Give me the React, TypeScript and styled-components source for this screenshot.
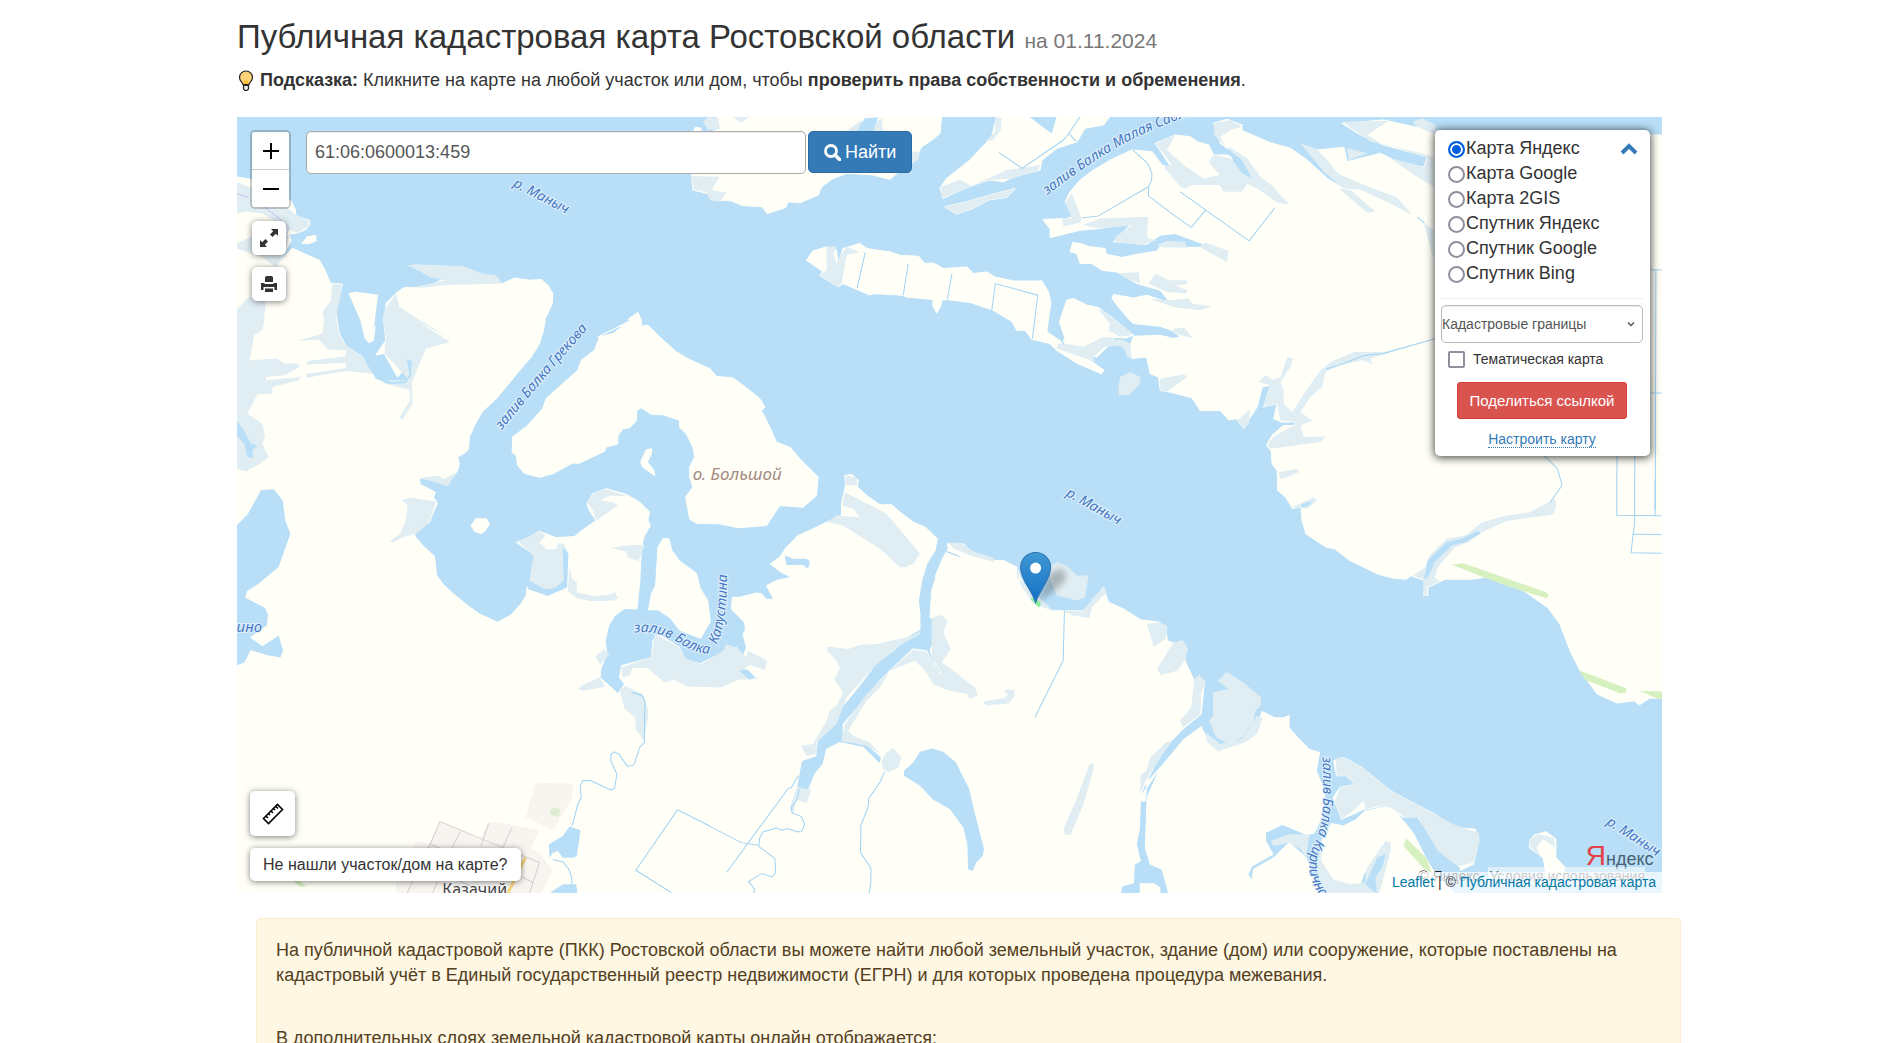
import React, { useState } from "react";
import styled, { createGlobalStyle } from "styled-components";

const sans = `"Liberation Sans", Arial, sans-serif`;
const mapFont = `"Noto Sans", "Open Sans", sans-serif`;

const GlobalStyle = createGlobalStyle`
  *, *::before, *::after { box-sizing: border-box; }
  html { scrollbar-width: none; }
  body {
    margin: 0;
    background: #fff;
    color: #333;
    font-family: ${sans};
    font-size: 18px;
    line-height: 25px;
  }
  button, input, select { font-family: inherit; margin: 0; }
`;

const Page = styled.main`
  display: flex;
  flex-direction: column;
  padding: 16px 236px 0 237px;
`;

const Title = styled.h1`
  margin: 0 0 6px;
  font-size: 33px;
  font-weight: 400;
  line-height: 42px;
`;

const TitleDate = styled.small`
  font-size: 21px;
  color: #777;
`;

const Hint = styled.p`
  display: flex;
  align-items: center;
  gap: 5px;
  margin: 0 0 24px;
  line-height: 25px;
`;

const MapArea = styled.section`
  position: relative;
  height: calc(100vh - 267px);
  min-height: 500px;
  overflow: hidden;
  background: #b8dff7;
`;

const MapDrawing = styled.svg`
  display: block;
  width: 100%;
  height: 100%;
`;

const TopLeft = styled.div`
  position: absolute;
  top: 13px;
  left: 13px;
  display: flex;
  align-items: flex-start;
  gap: 15px;
`;

const ToolColumn = styled.div`
  display: flex;
  flex-direction: column;
  align-items: flex-start;
`;

const ZoomGroup = styled.div`
  display: flex;
  flex-direction: column;
  border: 2px solid rgba(0, 0, 0, 0.2);
  border-radius: 5px;
  background-clip: padding-box;
`;

const ZoomButton = styled.button`
  display: flex;
  align-items: center;
  justify-content: center;
  width: 37px;
  height: 37px;
  padding: 0;
  border: 0;
  background: #fff;
  color: #000;
  &:first-child { height: 38px; border-bottom: 1px solid #ccc; border-radius: 3px 3px 0 0; }
  &:last-child { border-radius: 0 0 3px 3px; }
`;

const FloatingButton = styled.button<{ $size?: number }>`
  display: flex;
  align-items: center;
  justify-content: center;
  width: ${(p) => p.$size ?? 34}px;
  height: ${(p) => p.$size ?? 34}px;
  padding: 0;
  border: 0;
  border-radius: 5px;
  background: #fff;
  color: #333;
  box-shadow: 0 1px 6px rgba(0, 0, 0, 0.5);
`;

const MapTools = styled.div`
  display: flex;
  flex-direction: column;
  gap: 12px;
  padding: 12px 0 0 2px;
`;

const SearchForm = styled.form`
  display: flex;
  gap: 2px;
  margin-top: 1px;
`;

const SearchInput = styled.input`
  width: 500px;
  height: 43px;
  padding: 0 8px;
  border: 1px solid #aaa;
  border-radius: 5px;
  background: #fff;
  box-shadow: inset 0 1px 1px rgba(0, 0, 0, 0.08);
  color: #555;
  font-size: 18px;
`;

const SearchButton = styled.button`
  display: flex;
  align-items: center;
  gap: 4px;
  height: 42px;
  padding: 0 15px;
  border: 1px solid #2e6da4;
  border-radius: 5px;
  background: #337ab7;
  color: #fff;
  font-size: 18px;
`;

const LayerPanel = styled.aside`
  position: absolute;
  top: 13px;
  right: 12px;
  width: 215px;
  padding: 6px 7px 8px 6px;
  border-radius: 5px;
  background: #fff;
  box-shadow: 0 1px 8px 1px rgba(0, 0, 0, 0.7);
`;

const LayerList = styled.fieldset`
  position: relative;
  margin: 0;
  padding: 0 0 0 7px;
  border: 0;
`;

const LayerOption = styled.label`
  display: flex;
  align-items: center;
  gap: 1px;
  line-height: 25px;
`;

const Radio = styled.input`
  appearance: none;
  width: 17px;
  height: 17px;
  margin-top: 2px;
  border: 2px solid #8f8f9d;
  border-radius: 50%;
  background: #fff;
  &:checked {
    border-color: #0060df;
    background: #0060df;
    box-shadow: inset 0 0 0 2px #fff;
  }
`;

const Collapse = styled.button`
  position: absolute;
  top: 5px;
  right: 3px;
  display: flex;
  padding: 0;
  border: 0;
  background: none;
`;

const Divider = styled.hr`
  margin: 12px 0 6px;
  border: 0;
  border-top: 1px solid #eee;
`;

const SelectBox = styled.div`
  position: relative;
  display: flex;
  svg { position: absolute; right: 8px; top: 15px; pointer-events: none; }
`;

const Select = styled.select`
  appearance: none;
  width: 100%;
  height: 38px;
  padding: 0;
  border: 1px solid #bbb;
  border-radius: 5px;
  background: #fff;
  box-shadow: inset 0 1px 1px rgba(0, 0, 0, 0.08);
  color: #555;
  font-size: 14px;
`;

const ThemeOption = styled.label`
  display: flex;
  align-items: center;
  gap: 8px;
  margin: 6px 0 0 7px;
  font-size: 14px;
  line-height: 21px;
`;

const Checkbox = styled.input`
  appearance: none;
  width: 17px;
  height: 17px;
  border: 2px solid #8f8f9d;
  border-radius: 2px;
  background: #fff;
`;

const PanelActions = styled.div`
  display: flex;
  flex-direction: column;
  align-items: center;
  gap: 12px;
  margin-top: 12px;
`;

const ShareButton = styled.button`
  height: 37px;
  padding: 0 12px;
  border: 1px solid #d43f3a;
  border-radius: 3px;
  background: #d9534f;
  color: #fff;
  font-size: 15px;
`;

const SetupLink = styled.a`
  border-bottom: 1px dotted #337ab7;
  color: #337ab7;
  font-size: 14px;
  line-height: 16px;
  text-decoration: none;
`;

const BottomLeft = styled.div`
  position: absolute;
  left: 13px;
  bottom: 12px;
  display: flex;
  flex-direction: column;
  align-items: flex-start;
  gap: 12px;
`;

const NotFoundButton = styled.button`
  height: 33px;
  padding: 0 13px;
  border: 0;
  border-radius: 5px;
  background: #fff;
  box-shadow: 0 1px 6px rgba(0, 0, 0, 0.5);
  color: #333;
  font-size: 16px;
`;

const Copyright = styled.p`
  position: absolute;
  right: 17px;
  bottom: 8px;
  display: flex;
  gap: 8px;
  margin: 0;
  color: #222;
  font-size: 14px;
  line-height: 18px;
  a { padding: 0 0 0 2px; background: rgba(255, 255, 255, 0.5); color: #555; text-decoration: none; }
`;

const Attribution = styled.p`
  position: absolute;
  right: 0;
  bottom: 0;
  margin: 0;
  padding: 0 6px;
  background: rgba(255, 255, 255, 0.7);
  font-size: 14px;
  line-height: 21px;
  a { color: #0078a8; text-decoration: none; }
`;

const Notice = styled.article`
  margin: 25px -19px 0 19px;
  padding: 19px;
  border: 1px solid #faebcc;
  border-radius: 5px;
  background: #fdf7e3;
  color: #54401f;
  p { margin: 0 0 38px; }
  p:last-child { margin: 0; }
`;

/* Map sheets: a letter names the sheet's origin and east-west scale, coordinates run in thirds of a unit. */
const sheets: Record<string, [number, number, number]> = {
  A: [230, 0, 1], D: [230, 320, 1], E: [230, 660, 1], F: [680, 220, 1], G: [680, 560, 1],
  H: [1140, 110, 1], I: [1140, 480, 1.014], J: [680, 110, 1], K: [1060, 110, 1], L: [580, 530, 1],
};

const trace = (source: string) => {
  let origin = sheets.A;
  const points: string[] = [];
  source.trim().split(/\s+/).forEach((token) => {
    if (sheets[token]) { origin = sheets[token]; return; }
    const [x, y] = token.split(",").map(Number);
    points.push(`${(origin[0] + (x * origin[2]) / 3).toFixed(1)},${(origin[1] + y / 3).toFixed(1)}`);
  });
  return points.join(" ");
};

const land = [
  // north-west shore
  `A 18,530 60,537 95,552 150,585 185,602 198,628 200,648 240,660 242,672 230,688 205,698 180,702 186,722 165,760 130,820 70,895 45,930 18,1030`,
  `A 218,730 235,710 260,706 260,722 240,730`,
  // western mainland and both banks of the inlets
  `A 190,745 270,780 285,805 303,848 340,852 325,910 320,940 330,1000 D 322,0 330,40 350,78 400,110 440,175 485,192 530,185 548,155 545,120 505,170 465,100 440,104 470,60 465,20
   A 465,990 470,910 500,880 525,862 590,862 640,838 700,835 820,850 855,833 900,840 935,838 955,855 970,880 968,910 945,960 940,1000
   D 947,0 942,30 930,70 905,110 870,150 850,175 800,235 760,272 735,315 720,350 718,385 705,398 685,410 690,430 685,450 655,492 620,478 570,473 572,492 618,515 612,530 624,548 610,580 600,606 570,620 555,645 580,675 615,708 622,765 640,790 670,818 715,855 750,880 805,905 845,883 875,850 890,825 893,800 950,825 1000,808 1015,800 1015,700 1000,680 960,690 910,700 862,665 900,650 930,632 980,652 1035,648 1060,628 1100,600 1080,570 1072,550 1090,520 1130,505 1190,522 1230,545 1260,575 1255,600 1262,615 1242,650 1235,690 1232,750 1230,790 1222,865 1185,863 1155,885 1137,915 1127,960 1132,1000 1115,1040 1110,1080
   E 1110,50 1150,85 1165,100 1185,70 1170,50 1175,20 L 125,435 125,405 215,380 220,330 235,310 300,350 315,385 360,400 400,380 470,350 485,395 500,350 490,310 497,300 495,275 470,250 455,235 458,200 480,200 530,187 545,190 560,207 582,205 560,165 590,150 635,140 605,125 572,100 600,80 620,50 655,15 690,0
   F 440,905 485,885 485,850 497,795 495,765 515,762 535,780 533,800 560,825 600,853 635,853 660,875 700,905 735,920 772,955 765,990 740,1030 725,1080
   G 725,60 715,120 720,160 720,205 680,230 640,270 585,312 550,360 510,410 480,445 465,490 425,520 412,545 408,585 365,600 350,680 385,690 405,640 430,610 440,565 480,545 550,560 600,610 605,590 550,540 490,540 490,490 560,410 600,360 650,310 700,265 740,270 770,330 790,348 765,310 750,270 765,235 765,180 750,170 755,90 785,0
   F 765,1070 790,1010 805,985 802,970 850,970 880,1000 940,1020 970,1020 1010,1040 G 1020,50 1060,130 1120,150 1210,150 1240,120 1270,80 1285,125 1330,145 1400,190 1440,185
   I 0,417 20,430 75,435 80,480 135,500 132,540 158,597 190,600 180,700 125,745 60,815 45,850 10,920 0,950 G 1440,620 1400,665 1395,720 1380,720 1378,800 1368,850 1380,900 1362,910 1360,965 1325,975 1320,1000 E 20,700 20,100
   D 20,1038 48,1025 65,990 115,1005 155,1012 163,990 150,942 125,958 100,975 65,950 115,915 118,880 108,860 50,830 55,812 90,790 150,740 185,640 170,600 162,540 135,505 95,507 55,580 20,615 A 18,1020 55,910 100,880 135,800`,
  // islet inside the western bay
  `A 360,880 380,876 445,885 435,960 433,1000 D 438,20 432,60 420,67 408,55 395,0`,
  `D 725,615 740,595 770,595 780,610 768,630 755,639 735,632`,
  // o. Bolshoy
  `A 1105,1010 1165,980 1200,970 1198,955 1225,937 1235,960 1235,978 1255,975 1280,1000 D 1285,45 1340,95 1380,118 1440,145
   F 70,440 90,445 110,468 160,473 190,495 240,535 255,560 245,570 270,620 290,665 330,680 360,715 415,770 410,825 370,860 300,855 260,915 175,922 120,910 50,908 30,895 18,830 40,800 30,770 30,740 45,710 40,680 20,640 0,620
   D 1350,300 1300,283 1265,282 1235,262 1222,270 1220,300 1200,322 1180,325 1165,345 1165,370 1130,380 1125,392 1045,430 1030,427 970,460 930,470 885,458 865,435 860,405 848,395 850,350 895,315 940,265 950,235 1045,150 1055,120 1095,90 1110,50 1150,40 1205,0`,
  `D 1233,425 1250,388 1266,385 1265,400 1253,425 1273,450 1275,465 1240,440`,
  `L 235,50 250,25 268,25 277,60 300,92 350,128 362,175 383,208 392,272 362,323 300,298 272,262 235,237 207,237 215,190 228,165`,
  // northern shore
  `J 35,195 100,150 100,62 120,58 110,18 785,18 780,70 755,90 725,110 700,155 650,190 630,208 580,195 500,190 455,208 425,230 415,255 360,278 325,275 318,292 262,310 248,290 190,287 155,272 100,270 85,250 40,240`,
  `J 42,62 48,52 62,54 66,64`,
  `J 780,235 800,205 870,150 935,80 950,18 1290,18 1270,45 1215,55 1190,95 1130,115 1085,150 1080,180 1000,200 970,215 930,210 880,225 830,245 790,265`,
  `J 795,290 860,275 930,255 1005,235 980,262 925,270 880,295 830,312`,
  // long island
  `F 380,120 400,92 440,80 470,90 475,130 490,85 540,70 560,85 630,95 660,105 715,108 735,130 760,128 790,145 860,140 880,160 920,155 945,170 1000,182 1085,182 1105,215 1112,245 1100,335 1145,365 1200,400 1272,450 1262,460 1190,428 1130,390 1110,370 1055,357 1035,330 1010,330 995,303 940,270 870,247 800,238 785,240 782,258 770,278 758,255 760,238 680,230 668,225 580,220 570,224 490,190 475,200 420,165 430,155`,
  `F 1160,240 1180,235 1220,255 1255,262 1300,295 1360,345 1290,370 1250,410 1135,380 1155,355 1138,305`,
  // north-eastern mainland
  `K 460,40 500,28 545,45 545,62 630,98 690,115 740,150 800,205 850,235 900,233 820,180 770,120 850,112 860,155 960,130 1030,165 1090,170 1100,140 970,105 900,75 845,40 970,30 1060,50 1200,75 1820,75
   I 1580,655 1505,652 1475,672 1460,660 1410,667 1350,640 1300,570 1270,510 1240,430 1205,382 1140,335 1100,312 1020,290 980,296 900,296 850,320 850,345 838,345 840,300 800,285 785,296 745,292 700,280 665,262 620,240 575,205 550,200 490,160 478,120 475,80 450,83 430,50 405,28
   H 412,1130 410,1080 395,1060 392,1020 378,1005 395,975 430,945 460,945 470,935 425,935 400,925 410,880 370,890 390,825 365,830 350,890 330,920 310,955 290,925 265,928 240,900 180,900 155,862 100,848 60,840 55,800 30,790 20,745
   K 260,740 215,745 205,720 220,678 300,675 340,685 360,680 340,662 300,648 220,640 205,625 175,590 155,565 160,553 220,563 260,555 330,578 300,540 230,520 170,485 125,480 95,460 60,460 50,430 30,425 38,397 60,400 90,410 135,415 138,432 185,442 230,432 290,422 300,410 410,412 440,405 345,370 300,375 260,402 160,395 215,340 120,355 60,360 -30,382 -30,355 -52,328 20,325 40,320 15,275 30,245 60,210 100,180 150,150 215,120 275,125 305,165 335,175 285,100 345,75 390,80 410,95 445,105 460,135 500,135 540,155 575,205 540,155 500,115 480,100`,
  // southern capes
  `I 85,1240 65,1165 30,1150 15,1100 20,950 60,860 130,775 180,738 205,790 240,798 310,778 350,720 360,692 395,710 420,712 440,705 440,742 465,770 500,806 530,815 520,870 540,920 550,980 515,1055 495,1062 420,1030 370,1055 370,1080 392,1120 330,1155 318,1180 330,1200 335,1165 395,1130 440,1085 490,1130 530,1240`,
  `I 0,1208 40,1208 58,1220 58,1240 0,1240`,
  `I 530,1090 565,1028 600,1035 640,1015 665,990 740,975 810,1060 870,1170 930,1240 690,1240 700,1180 740,1100 720,1090 660,1180 640,1240 560,1200 535,1140`,
  `I 572,840 600,830 655,860 740,930 870,1000 930,1040 990,1045 1000,1080 985,1150 940,1170 880,1130 820,1010 780,1010 720,975 660,985 595,1015 570,950 590,920 635,910 610,885 580,885`,
  `I 1150,1080 1165,1062 1198,1052 1228,1075 1228,1130 1255,1160 1250,1190 1220,1240 1200,1180 1190,1130 1150,1100`,
];

const marsh = [
  `A 20,545 100,575 160,610 195,640 240,662 238,680 205,698 182,690 100,640 55,635 20,640`,
  `A 20,730 90,700 180,705 165,765 140,800 100,770 20,745`,
  `A 20,930 60,890 110,900 105,960 D 100,30 75,45 62,120 145,115 165,130 210,130 210,142 165,165 110,170 110,180 215,170 210,180 130,200 130,220 85,222 55,280 100,310 108,345 100,370 118,410 85,435 50,452 22,445`,
  `A 340,855 320,950 328,1000 D 345,70 400,110 430,160 350,152 232,172 232,160 350,143 350,128 232,133 235,122 350,108 350,90 295,88 270,58 205,62 280,40 285,0 A 280,935 305,900 310,848`,
  `A 500,880 510,920 660,1015 D 560,0 662,65 590,85 575,120 548,185 550,250 520,297 510,292 543,240 540,208 460,188 480,180 540,180 465,100 470,50 460,0 A 465,930`,
  `A 535,795 560,792 700,798 760,820 800,825 820,850 640,855 590,862 550,862 645,840 600,830 570,812`,
  `D 517,538 545,532 620,543 600,606 560,640 520,650 490,667 482,662 512,640 530,600 535,555`,
  `D 570,472 625,465 645,475 680,455 655,497 625,487`,
  `D 865,662 900,648 930,632 950,645 930,665 950,687 980,685 985,668 1003,670 1015,695 1000,690 1005,780 975,803 945,806 900,780 912,705`,
  `D 1072,545 1095,515 1130,507 1195,527 1140,525 1112,540 1150,545 1165,555 1100,600 1090,570`,
  `D 1145,683 1185,675 1245,673 1228,722 1195,710 1188,692`,
  `D 1020,740 1028,775 1042,785 1042,815 1090,826 1145,822 1155,813 1165,832 1155,840 1085,842 1040,832 1015,810`,
  `D 1098,1008 1122,985 1140,1000 1112,1032`,
  `E 1045,85 1060,72 1110,50 1128,78 1060,90`,
  `E 1170,90 1185,75 1240,100 1257,150 1253,180 1243,240 1218,205 1217,170 1185,145`,
  `L 125,410 215,378 225,310 300,350 318,385 365,400 430,360 440,340 475,355 500,380 505,360 562,390 555,418 510,403 495,412 535,445 475,447 425,470 325,467 282,447 255,455 203,412 158,412 150,435 128,440`,
  `F 497,765 530,770 532,795 498,793`, `F 495,815 620,880 700,975 720,1000 700,1030 660,1040 600,985 490,915 440,905 470,885 540,890 520,865 487,855`,
  `F 805,965 845,968 880,992 940,1012 945,1025 880,1008 820,985`,
  `G 1010,5 1020,70 1060,130 1120,150 1010,50`,
  `G 1110,20 1130,5 1160,15 1190,45 1225,45 1215,110 1190,120 1130,105 1110,60`,
  `G 1150,150 1210,150 1240,110 1272,80 1280,95 1235,140 1228,172 1180,165`,
  `G 645,0 705,0 680,20 660,20`,
  `G 720,155 720,210 700,225 590,250 540,252 505,265 443,257 442,270 470,300 480,325 463,355 490,395 470,435 450,450 440,480 400,550 363,555 380,585 412,580 410,545 470,490 500,410 580,320 650,260 720,220`,
  `G 755,172 785,162 803,182 790,215 812,265 785,305 800,315 885,380 893,405 868,415 862,400 800,388 760,370 735,330 705,300 630,330 600,380 560,420 505,510 520,525 570,545 600,580 560,555 485,540 495,490 560,400 640,320 700,268 740,272 770,330 790,345 755,290`,
  `G 605,600 620,575 640,562 665,590 655,620 625,635 610,625`,
  `G 350,682 395,685 380,727 350,715 340,760 330,740`,
  `G 908,425 918,420 972,412 985,400 972,395 980,385 1003,388 1003,408 985,428 920,434`,
  `G 1228,610 1240,606 1240,625 1210,730 1172,820 1155,823 1150,805 1195,700`,
  `G 1400,190 1440,185 1440,245 1425,255`,
  `I 20,432 55,425 80,435 75,475 40,497`, `I 98,485 125,478 142,505 130,540 110,570 60,583 50,565`,
  `I 160,595 175,582 195,605 180,635 178,700 125,740 118,720 150,680`,
  `I 230,600 255,573 305,605 357,650 355,675 340,690 335,720 300,770 260,788 225,770 203,720 215,705 215,635 260,625`,
  `I 345,705 362,712 345,760 310,785 230,812 195,780 195,755 235,790 300,775`,
  `I 75,785 95,780 60,830 15,900 0,940 0,885 18,870 30,830`,
  `I 578,832 600,830 655,860 740,930 870,1000 925,1030 965,1045 1000,1055 1003,1080 985,1145 940,1155 880,1110 835,1040 825,1010 785,1012 740,980 700,975 665,985 660,960 635,985 595,1015 575,960 590,920 635,910 610,885 580,885`,
  `I 500,1060 440,1060 385,1080 395,1095 440,1085 475,1105 490,1130`,
  `I 535,1075 560,1030 540,1060 535,1140 570,1195 620,1210 665,1205 668,1165 690,1130 725,1080 740,1085 740,1110 705,1240 540,1240 520,1160`,
  `I 1150,1095 1150,1075 1175,1060 1220,1070 1228,1100 1190,1075 1170,1100 1185,1130`,
  `J 70,35 85,20 115,25 120,55 85,60`, `J 35,198 120,200 95,240 140,248 120,275 90,270 80,245 42,240`,
  `J 160,20 210,20 185,38`,
  `J 500,62 545,30 545,45 530,65`, `J 590,35 605,25 610,65 580,65`, `J 690,125 720,125 715,150 695,158`,
  `J 782,230 840,208 875,228 980,180 1080,165 1075,180 1000,205 930,210 830,245 785,265`,
  `J 795,290 860,275 930,255 1005,235 980,262 925,270 880,295 830,312`,
  `J 915,95 945,65 945,20 965,25 962,60 940,90`,
  `F 440,80 470,78 460,100 470,130 485,100 500,80 540,95 500,105 485,190 475,200 420,165 440,150`,
  `F 1255,262 1300,295 1355,340 1320,350 1285,330 1292,310`,
  `F 1135,370 1215,380 1265,350 1315,360 1315,375 1275,378 1240,410 1245,425 1130,385`,
  `F 1320,470 1350,455 1380,470 1380,490 1345,525 1315,525 1315,500`,
  `K 285,100 345,75 320,120 370,165 430,205 478,195 445,155 460,135 510,145 575,205 540,150 500,115 510,112 560,145 600,200 640,230 655,250 688,283 650,278 590,235 560,222 545,245 490,245 478,225 390,225 378,235 360,230 310,170 335,165`,
  `K 460,40 510,30 545,50 510,60 480,80 495,110 462,75`,
  `K 15,275 35,250 65,325 60,338 10,348 5,325 35,325`,
  `K 65,345 120,325 265,320 260,370 265,385 290,390 240,405 165,395 165,380 215,345 120,355`,
  `K 290,405 320,392 375,395 380,412 310,412`, `K 435,397 505,422 500,455 415,410`,
  `K 175,490 235,485 240,520 190,500`, `K 265,520 285,490 325,510 380,510 380,522 345,525 380,540 378,550 320,545`,
  `K 265,565 320,570 385,565 395,580 455,588 420,600 345,592`,
  `K 340,655 370,652 400,685 340,670`,
  `K 110,595 150,625 215,670 205,680 145,660 150,640`, `K 0,698 70,710 130,680 180,685 210,700 215,745 200,740 195,720 180,705 130,710 100,740 20,720`,
  `K 300,808 370,795 380,800 320,845 300,840`,
  `H 60,805 130,792 140,798 75,838 60,830`,
  `H 355,815 375,795 395,808 420,800 440,740 458,745 450,770 420,815 430,840 430,880 455,905 500,835 540,780 570,755 640,725 730,725 860,690 780,715 690,745 695,762 665,750 600,765 555,785 545,830 510,860 480,905 515,930 480,945 490,980 555,978 540,995 390,1015 380,1005 400,978 460,945 470,935 420,930 410,880 370,890 390,825`,
  `H 290,930 330,895 325,940 310,957`, `H 415,1085 470,1075 475,1085 440,1100 418,1105`,
  `H 455,1190 520,1160 530,1170 500,1195`,
  `K 845,35 985,32 920,75 970,105 1010,110 930,95 880,60`, `K 1055,35 1085,25 1125,45 1125,75 1070,50`,
  `K 985,105 1120,140 1120,230 1060,195 990,145 1090,170 1100,145`,
  `K 720,100 770,118 800,150 830,190 900,220 1010,262 1055,315 990,280 900,240 850,235 790,185`,
  `K 835,235 870,240 945,305 920,308`, `K 860,115 920,130 865,150`, `K 1090,340 1120,360 1120,450`,
  `I 805,285 840,262 855,225 905,175 960,165 1010,125 1080,105 1150,95 1225,55 1230,75 1220,103 1160,110 1080,122 1010,155 970,185 930,200 880,260 870,290 885,302 848,320 848,345 838,345 835,295`,
];

const water = [
  `D 22,300 45,330 65,370 85,375 70,390 72,412 55,410 45,370 22,345`,
  `D 400,112 440,160 485,185 530,182 540,160 532,118 548,122 545,165 530,188 480,192 440,175`,
  `D 1000,680 1017,700 1012,800 955,826 895,805 900,795 950,808 985,800 1003,780`,
  `L 615,75 640,85 680,85 690,92 685,115 670,103 620,103`, `L 478,418 505,418 525,440 510,447 490,430`,
  `G 672,630 700,605 720,573 755,563 790,573 828,605 868,685 885,760 912,865 908,885 888,905 878,930 864,925 862,850 850,800 810,745 758,715 720,675 672,645`,
  `E 960,590 958,550 1000,525 1020,497 1053,508 1042,585 1030,590 1000,590 985,570 970,575`,
  `E 962,695 1000,670 1040,670 1044,697`,
  `J 530,62 555,25 595,22 580,65`, `J 1045,18 1130,18 1115,70 1100,60`,
  `K 500,115 545,150 575,205 545,190 520,155`,
  `I 475,72 505,62 503,72 480,82`,
  `I 838,295 850,240 905,185 950,175 1000,150 1005,160 960,185 920,195 870,245 850,290`,
  `I 700,1240 665,1210 700,1130 725,1118 715,1160 695,1190`,
  `I 785,1012 820,1010 880,1110 945,1160 940,1240 880,1190 845,1130 810,1060`,
];

const green = [
  `I 920,252 955,248 1200,335 1207,345 1200,353 1080,315 1000,285`,
  `I 1295,568 1435,622 1437,635 1418,638 1315,598`, `I 1475,630 1580,633 1580,655 1530,655`,
  `I 778,1095 785,1072 845,1130 862,1175 840,1165`, `E 185,655 205,655 230,675 215,678`,
];

const town = [
  `E 918,366 1030,368 1028,410 972,508 888,470`,
  `E 632,480 750,535 778,485 800,483 930,508 905,560 932,578 970,630 935,697 500,697 500,660 560,540 600,550`,
];

const roads = [
  `E 533,697 600,555 632,482 820,560 930,605 900,697`, `E 600,548 650,570`, `E 668,560 693,512`, `E 755,555 778,487`, `E 820,560 848,500`, `E 610,697 625,660`, `E 850,635 912,665`, `E 690,660 760,690`,
];

const streams = [
  `F 532,203 556,97`, `F 670,225 685,130`, `F 802,238 816,160`, `F 935,270 946,190 1073,225 1057,355`, `F 1143,358 1152,373`, `F 800,993 838,1008`,
  `J 956,127 1026,175 1150,90 1166,70 1200,20`, `J 1166,70 1188,94`,
  `K 218,120 262,160 275,190 274,210 265,230 265,258 348,320 393,352 436,300`, `K 67,323 113,318 265,230`, `K 360,245 566,392 642,295`, `K 1070,320 1092,340`, `K 163,686 195,686`,
  `H 557,776 600,763 670,736 730,730 885,685`,
  `H 1210,1035 1250,1075 1264,1125 1230,1172 I 1213,65`,
  `H 1530,479 1580,479`, `H 1545,479 1543,1200`, `H 1530,848 1580,848`, `H 1429,1030 I 1408,0 1408,104 1580,106`, `H 1482,1030 I 1461,0 1461,125 1450,217 1580,219`, `I 1455,161 1580,162`, `I 1521,0 1521,106`,
  `E 1207,96 1235,103 1246,120 1244,245 1230,260 1213,313 1193,316 1168,280 1153,273 1144,282 1144,300 1162,340 1155,382 1145,388 1085,360 1060,359 1052,375 1055,410 1045,430 1028,495`,
  `E 970,596 1000,602 1018,625 1027,650 1027,670`, `E 1325,695 1219,628 1343,447 1440,495 G 0,750 185,845 237,853`,
  `G 141,934 325,683 335,680 355,645`,
  `G 358,685 352,715 335,740 337,757 365,767 374,790 367,810 353,813 323,803 305,808 290,801 250,813 240,830 237,857 285,892 288,935 278,948 245,938 206,962 225,985 222,997`,
  `G 614,633 600,665 567,712 564,740 543,793 542,875 573,922 573,960 568,997`,
  `G 1153,150 1149,300 1064,470`,
];

const polygons = (rings: string[], fill: string, stroke?: string) => (
  <g fill={fill} stroke={stroke} strokeWidth={stroke ? 1 : 0} strokeLinejoin="round">
    {rings.map((ring, i) => <polygon key={i} points={trace(ring)} />)}
  </g>
);

const lines = (routes: string[], stroke: string, width = 1) => (
  <g fill="none" stroke={stroke} strokeWidth={width}>
    {routes.map((route, i) => <polyline key={i} points={trace(route)} />)}
  </g>
);

const waterLabels = [
  { id: "manych-w", d: "M513 186 L582 222", text: "р. Маныч" },
  { id: "manych-c", d: "M1065 495 L1137 535", text: "р. Маныч" },
  { id: "manych-e", d: "M1605 823 L1675 868", text: "р. Маныч" },
  { id: "grekova", d: "M502 430 Q535 390 552 370 T606 308", text: "залив Балка Грекова" },
  { id: "sablina", d: "M1047 195 Q1090 162 1125 143 T1240 98", text: "залив Балка Малая Саблина" },
  { id: "kapustina", d: "M635 632 Q658 629 680 643 T725 652", text: "залив Балка" },
  { id: "kapustina-n", d: "M717 644 Q729 620 727 560", text: "Капустина" },
  { id: "kirpich", d: "M1322 756 C1324 810 1322 825 1314 842 C1304 862 1308 885 1328 905", text: "залив Балка Кирпичная" },
];

const BasinMap = () => (
  <MapDrawing viewBox="237 117 1425 775" preserveAspectRatio="xMidYMid slice" role="img" aria-label="Карта">
    <defs>
      <linearGradient id="pin" x1="0" y1="0" x2="0" y2="1">
        <stop offset="0" stopColor="#4198d3" />
        <stop offset="1" stopColor="#126fc6" />
      </linearGradient>
      <filter id="pin-shadow" x="-50%" y="-50%" width="200%" height="200%"><feGaussianBlur stdDeviation="3" /></filter>
    </defs>
    <rect x="237" y="117" width="1425" height="775" fill="#b8dff7" />
    {polygons(land, "#fffff8", "#fffff8")}
    {polygons(marsh, "#e0eef4")}
    {polygons(water, "#b8dff7")}
    {polygons(green, "#d7f0c0")}
    {polygons(town, "#f8f5f1")}
    {polygons([`E 968,438 992,445 988,470 960,460`], "#e0edd5")}
    {lines(roads, "#d2d0ce")}
    {lines([`E 888,590 835,697`], "#f6d57c", 3)}
    {lines(streams, "#9fd2f2")}
    {lines([`A 20,580 60,592`, `A 105,620 150,655 178,680 175,700`], "#c4c8f2")}
    <g fontFamily={mapFont} fontStyle="italic" fontSize="14" fill="#4577c4" stroke="#e1f1fb" strokeWidth="2" paintOrder="stroke">
      {waterLabels.map((label) => (
        <React.Fragment key={label.id}>
          <path id={label.id} d={label.d} fill="none" stroke="none" />
          <text><textPath href={`#${label.id}`}>{label.text}</textPath></text>
        </React.Fragment>
      ))}
      <text x="263" y="631" textAnchor="end" fontSize="15">тино</text>
    </g>
    <text x="693" y="480" fontFamily={mapFont} fontStyle="italic" fontSize="17" fill="#a58a80">о. Большой</text>
    <text x="443" y="894" fontFamily={mapFont} fontSize="16" fill="#444" stroke="#fff" strokeWidth="2" paintOrder="stroke">Казачий</text>
    <polygon points="1030,598 1035,597 1041,603 1039,607" fill="#8df0a0" />
    <path d="M1036 602 L1048 575 Q1062 562 1066 575 Q1066 585 1036 602Z" fill="#333" opacity="0.3" filter="url(#pin-shadow)" />
    <path d="M1035.500 602 C1032 590 1020.500 579 1020.500 567 A15 15 0 0 1 1050.500 567 C1050.500 579 1039 590 1035.500 602Z" fill="url(#pin)" stroke="#2b71b0" />
    <circle cx="1035.500" cy="567.500" r="5.500" fill="#fff" />
    <text x="1585" y="864" fontFamily={sans}>
      <tspan fill="#e5404a" fontSize="28">Я</tspan>
      <tspan fill="#4a6074" fontSize="18">ндекс</tspan>
    </text>
  </MapDrawing>
);

const BulbIcon = () => (
  <svg width="18" height="22" viewBox="0 0 18 22" aria-hidden="true">
    <path d="M6 14.500 C5.500 12 2.500 11 2.500 7.500 A6.500 6.500 0 0 1 15.500 7.500 C15.500 11 12.500 12 12 14.500Z" fill="#ffd37a" stroke="#222" strokeWidth="1.200" />
    <path d="M7 14 V10 L9 11 L11 10 V14" fill="#fbc02d" />
    <path d="M6.500 15.500 H11.500 V19 L10 20.500 H8 L6.500 19Z" fill="#e8e8e8" stroke="#222" strokeWidth="1.200" />
  </svg>
);

const ExpandIcon = () => (
  <svg width="20" height="20" viewBox="0 0 20 20" fill="currentColor" aria-hidden="true">
    <path d="M12 1 H19 V8 L16.800 5.800 L13.500 9 L11 6.500 L14.200 3.200Z M8 19 H1 V12 L3.200 14.200 L6.500 11 L9 13.500 L5.800 16.800Z" />
  </svg>
);

const PrintIcon = () => (
  <svg width="18" height="18" viewBox="0 0 18 18" fill="currentColor" aria-hidden="true">
    <path d="M5 2 L6.500 1 H11.500 L13 2 V7 H5Z M1 8 H4 L5 9 H13 L14 8 H17 V15 H14.500 V12 H3.500 V15 H1Z M5 13.500 H13 V17 H5Z" />
  </svg>
);

const SearchIcon = () => (
  <svg width="17" height="18" viewBox="0 0 17 18" fill="none" stroke="currentColor" aria-hidden="true">
    <circle cx="7" cy="8" r="5.500" strokeWidth="2.800" />
    <path d="M11 12 L15.500 16.500" strokeWidth="3.500" strokeLinecap="round" />
  </svg>
);

const RulerIcon = () => (
  <svg width="22" height="22" viewBox="0 0 22 22" fill="none" stroke="#000" strokeWidth="1.600" aria-hidden="true">
    <path d="M1.500 15.500 L15.500 1.500 L20.500 6.500 L6.500 20.500Z M4 13 L6 15 M6.500 10.500 L8 12 M9 8 L11 10 M11.500 5.500 L13 7 M14 3.500 L16 5.500" />
  </svg>
);

const layers = ["Карта Яндекс", "Карта Google", "Карта 2GIS", "Спутник Яндекс", "Спутник Google", "Спутник Bing"];

export default function App() {
  const [layer, setLayer] = useState(layers[0]);
  return (
    <>
      <GlobalStyle />
      <Page>
        <Title>Публичная кадастровая карта Ростовской области <TitleDate>на 01.11.2024</TitleDate></Title>
        <Hint>
          <BulbIcon />
          <span><b>Подсказка:</b> Кликните на карте на любой участок или дом, чтобы <b>проверить права собственности и обременения</b>.</span>
        </Hint>
        <MapArea>
          <BasinMap />
          <TopLeft>
            <ToolColumn>
              <ZoomGroup>
                <ZoomButton aria-label="Приблизить">
                  <svg width="16" height="16" viewBox="0 0 16 16" stroke="#000" strokeWidth="2"><path d="M0 8 H16 M8 0 V16" /></svg>
                </ZoomButton>
                <ZoomButton aria-label="Отдалить">
                  <svg width="16" height="16" viewBox="0 0 16 16" stroke="#000" strokeWidth="2"><path d="M0 8 H16" /></svg>
                </ZoomButton>
              </ZoomGroup>
              <MapTools>
                <FloatingButton aria-label="На весь экран"><ExpandIcon /></FloatingButton>
                <FloatingButton aria-label="Печать"><PrintIcon /></FloatingButton>
              </MapTools>
            </ToolColumn>
            <SearchForm onSubmit={(e) => e.preventDefault()}>
              <SearchInput aria-label="Кадастровый номер" defaultValue="61:06:0600013:459" />
              <SearchButton><SearchIcon />Найти</SearchButton>
            </SearchForm>
          </TopLeft>
          <Copyright><span>© Яндекс</span><a href="#terms">Условия использования</a></Copyright>
          <Attribution><a href="#leaflet">Leaflet</a> | © <a href="#pkk">Публичная кадастровая карта</a></Attribution>
          <LayerPanel>
            <LayerList aria-label="Слои">
              {layers.map((name) => (
                <LayerOption key={name}>
                  <Radio type="radio" name="layer" checked={layer === name} onChange={() => setLayer(name)} />
                  {name}
                </LayerOption>
              ))}
              <Collapse aria-label="Свернуть">
                <svg width="22" height="16" viewBox="0 0 22 16" fill="none" stroke="#337ab7" strokeWidth="4"><path d="M4 12 L11 5 L18 12" /></svg>
              </Collapse>
            </LayerList>
            <Divider />
            <SelectBox>
              <Select aria-label="Границы"><option>Кадастровые границы</option></Select>
              <svg width="8" height="8" viewBox="0 0 8 8" fill="none" stroke="#555" strokeWidth="1.500"><path d="M1 2.500 L4 5.500 L7 2.500" /></svg>
            </SelectBox>
            <ThemeOption><Checkbox type="checkbox" />Тематическая карта</ThemeOption>
            <PanelActions>
              <ShareButton>Поделиться ссылкой</ShareButton>
              <SetupLink href="#setup">Настроить карту</SetupLink>
            </PanelActions>
          </LayerPanel>
          <BottomLeft>
            <FloatingButton $size={45} aria-label="Линейка"><RulerIcon /></FloatingButton>
            <NotFoundButton>Не нашли участок/дом на карте?</NotFoundButton>
          </BottomLeft>
        </MapArea>
        <Notice>
          <p>На публичной кадастровой карте (ПКК) Ростовской области вы можете найти любой земельный участок, здание (дом) или сооружение, которые поставлены на кадастровый учёт в Единый государственный реестр недвижимости (ЕГРН) и для которых проведена процедура межевания.</p>
          <p>В дополнительных слоях земельной кадастровой карты онлайн отображается:</p>
        </Notice>
      </Page>
    </>
  );
}
